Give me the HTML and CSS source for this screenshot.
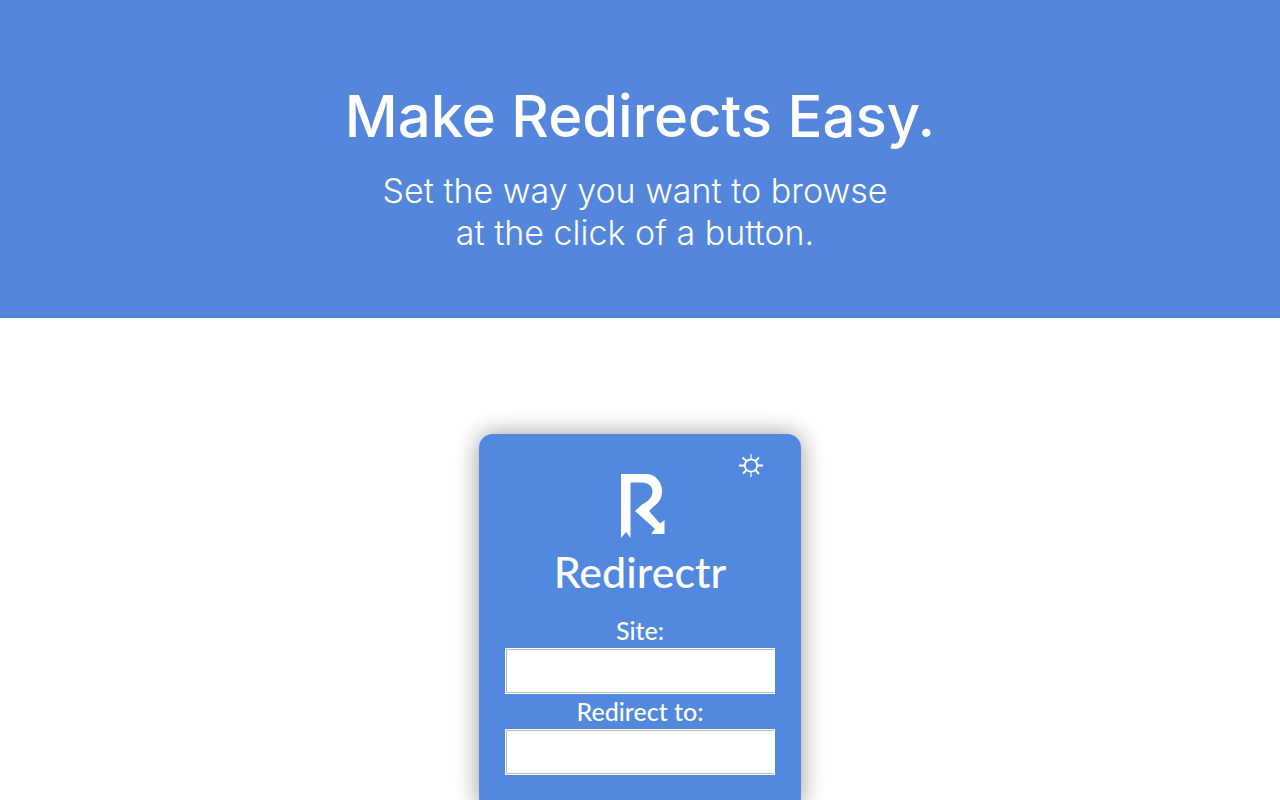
FILE: index.html
```html
<!DOCTYPE html>
<html lang="en">
<head>
<meta charset="utf-8">
<meta name="viewport" content="width=device-width, initial-scale=1">
<title>Redirectr</title>
<link rel="stylesheet" href="styles.css">
</head>
<body>
<header class="hero">
  <h1 class="hero-title">Make Redirects Easy.</h1>
  <p class="hero-text">Set the way you want to browse<br>at the click of a button.</p>
</header>
<main class="stage">
  <form class="card">
    <button class="settings" type="button" aria-label="Settings">
      <svg width="24" height="24" viewBox="0 0 24 24" fill="none" stroke="#fff">
        <circle cx="12" cy="11.500" r="6.200" stroke-width="1.800"/>
        <path stroke-width="2" d="M0 11.500H5.500M18.500 11.500H24M3.500 3.500 7.500 7M16.500 16l3.500 4M20 3.500 16.500 7M7.500 16l-3.500 3.500"/>
        <path stroke-width="1.200" d="M12 0V5M12 18v5"/>
      </svg>
    </button>
    <svg class="logo" width="49" height="66" viewBox="-5 0 49 66" fill="#fff" aria-hidden="true">
      <path d="M0 1H25C34 1 41 8.500 41 18C41 25 38 30 33 33L28 38L39 50.500L43.500 47V61H31V59.500L34 56L14 38L21 31.500C28 28 31.500 24 31.500 18.500C31.500 13 27 9.500 21 9.500H9.500V65L5 59L0 65Z"/>
    </svg>
    <h2 class="brand">Redirectr</h2>
    <label class="label" for="site">Site:</label>
    <input class="field" id="site" type="text">
    <label class="label" for="target">Redirect to:</label>
    <input class="field" id="target" type="text">
  </form>
</main>
</body>
</html>
```
FILE: styles.css
```css
* {
  box-sizing: border-box;
}

body {
  margin: 0;
  height: 100vh;
  overflow: hidden;
  background: #fff;
  color: #fff;
  font-family: Inter, sans-serif;
}

.hero {
  padding: 80px 16px 64px;
  background: #5487dc;
  text-align: center;
}

.hero-title {
  margin: 0;
  font-size: 58px;
  font-weight: 500;
  line-height: 72px;
}

.hero-text {
  margin: 18px 10px 0 0;
  font-size: 34px;
  font-weight: 300;
  line-height: 42px;
}

.stage {
  display: flex;
  justify-content: center;
  padding: 116px 16px 32px;
}

.card {
  position: relative;
  display: flex;
  flex-direction: column;
  align-items: center;
  width: 100%;
  max-width: 322px;
  padding: 39px 26px 36px;
  border-radius: 14px;
  background: #5288dd;
  box-shadow: 0 0 24px rgba(0, 0, 0, 0.4);
}

.settings {
  position: absolute;
  top: 20px;
  right: 38px;
  padding: 0;
  border: 0;
  background: none;
}

.settings svg,
.logo {
  display: block;
}

.brand {
  margin: 6px 0 14px;
  font-family: Lato, sans-serif;
  font-size: 43px;
  font-weight: 500;
  line-height: 54px;
}

.label {
  font-family: Lato, sans-serif;
  font-size: 25px;
  font-weight: 500;
  line-height: 35px;
}

.field {
  width: 100%;
  height: 46px;
  padding: 0 8px;
  border: 1px solid #fff;
  border-radius: 0;
  background: #fff;
  box-shadow: inset 1px 1px #bbb, inset 0 -1px #bbb;
  color: #333;
  font: 20px Lato, sans-serif;
}
```
